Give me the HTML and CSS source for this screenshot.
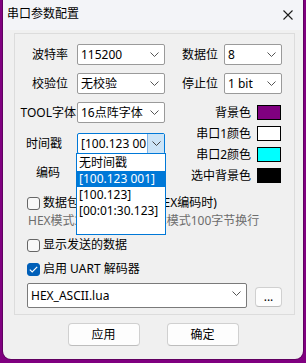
FILE: index.html
```html
<!DOCTYPE html>
<html lang="zh-CN">
<head>
<meta charset="utf-8">
<title>串口参数配置</title>
<link rel="stylesheet" href="styles.css">
</head>
<body>
<div class="window">
  <div class="titlebar">
    <span class="title">串口参数配置</span>
    <svg class="close" width="10" height="10" viewBox="0 0 10 10"><path d="M0.5 0.5L9.5 9.5M9.5 0.5L0.5 9.5" stroke="#1b1b1b" stroke-width="1.1" fill="none"/></svg>
  </div>
  <div class="body">
    <div class="group">
      <div class="top">
        <div class="col-left">
          <div class="row">
            <span class="lbl pr9">波特率</span>
            <div class="combo"><span class="val">115200</span><svg class="chev" width="9" height="5" viewBox="0 0 9 5"><path d="M0.5 0.5L4.5 4.5L8.5 0.5" stroke="#555" fill="none"/></svg></div>
          </div>
          <div class="row">
            <span class="lbl pr9">校验位</span>
            <div class="combo"><span class="val">无校验</span><svg class="chev" width="9" height="5" viewBox="0 0 9 5"><path d="M0.5 0.5L4.5 4.5L8.5 0.5" stroke="#555" fill="none"/></svg></div>
          </div>
          <div class="row">
            <span class="lbl pr1">TOOL字体</span>
            <div class="combo"><span class="val">16点阵字体</span><svg class="chev" width="9" height="5" viewBox="0 0 9 5"><path d="M0.5 0.5L4.5 4.5L8.5 0.5" stroke="#555" fill="none"/></svg></div>
          </div>
          <div class="row row-ts">
            <span class="lbl pr15">时间戳</span>
            <div class="combo focus">
              <span class="val clip">[100.123 001]</span>
              <span class="arrowbtn"><svg width="9" height="5" viewBox="0 0 9 5"><path d="M0.5 0.5L4.5 4.5L8.5 0.5" stroke="#444" fill="none"/></svg></span>
              <ul class="dropdown">
                <li>无时间戳</li>
                <li class="sel">[100.123 001]</li>
                <li>[100.123]</li>
                <li>[00:01:30.123]</li>
              </ul>
            </div>
          </div>
          <div class="row row-enc">
            <span class="lbl pr17">编码</span>
            <div class="combo"><span class="val">HEX</span></div>
          </div>
        </div>
        <div class="col-right">
          <div class="row">
            <span class="rlbl">数据位</span>
            <div class="combo small"><span class="val">8</span><svg class="chev" width="9" height="5" viewBox="0 0 9 5"><path d="M0.5 0.5L4.5 4.5L8.5 0.5" stroke="#555" fill="none"/></svg></div>
          </div>
          <div class="row">
            <span class="rlbl">停止位</span>
            <div class="combo small"><span class="val">1 bit</span><svg class="chev" width="9" height="5" viewBox="0 0 9 5"><path d="M0.5 0.5L4.5 4.5L8.5 0.5" stroke="#555" fill="none"/></svg></div>
          </div>
          <div class="swrow first"><span class="slbl">背景色</span><span class="swatch purple"></span></div>
          <div class="swrow"><span class="slbl">串口1颜色</span><span class="swatch white"></span></div>
          <div class="swrow"><span class="slbl">串口2颜色</span><span class="swatch cyan"></span></div>
          <div class="swrow"><span class="slbl">选中背景色</span><span class="swatch black"></span></div>
        </div>
      </div>
      <label class="check c1"><span class="box"></span>数据包自动分帧显示(HEX编码时)</label>
      <div class="hint">HEX模式32字节换行, 文本模式100字节换行</div>
      <label class="check c2"><span class="box"></span>显示发送的数据</label>
      <label class="check c3"><span class="box on"><svg width="9" height="7" viewBox="0 0 9 7"><path d="M0.8 3.6L3.2 6L8.2 0.8" stroke="#fff" stroke-width="1.2" fill="none"/></svg></span>启用 UART 解码器</label>
      <div class="lua-row">
        <div class="combo lua"><span class="val">HEX_ASCII.lua</span><svg class="chev" width="9" height="5" viewBox="0 0 9 5"><path d="M0.5 0.5L4.5 4.5L8.5 0.5" stroke="#555" fill="none"/></svg></div>
        <button class="btn dots">...</button>
      </div>
    </div>
    <div class="buttons">
      <button class="btn main">应用</button>
      <button class="btn main">确定</button>
    </div>
  </div>
</div>
</body>
</html>
```
FILE: styles.css
```css
* { box-sizing: border-box; }
html, body { margin: 0; padding: 0; }
body {
  width: 306px;
  height: 363px;
  background: #800080;
  overflow: hidden;
  font-family: "Noto Sans", "Noto Sans CJK SC", sans-serif;
  font-size: 12px;
  color: #000;
}
.window {
  margin-left: 3px;
  width: 300px;
  height: 359px;
  background: #f0f0f0;
  border-radius: 0 0 8px 8px;
  box-shadow: 0 0 0 1px rgba(0,0,0,0.25);
  overflow: visible;
}
.titlebar {
  height: 30px;
  background: #f3f4f8;
  display: flex;
  align-items: center;
  justify-content: space-between;
  padding: 0 10px 2px 4px;
}
.title { font-size: 12px; line-height: 16px; }
.close { display: block; margin-top: 1px; }
.body { padding-top: 3px; }
.group {
  margin-left: 11px;
  width: 281px;
  height: 282px;
  border: 1px solid #dcdcdc;
  padding-top: 10px;
}
.top { display: flex; }
.col-left { width: 150px; display: flex; flex-direction: column; gap: 8px; }
.col-right { width: 117px; display: flex; flex-direction: column; gap: 8px; }
.row { display: flex; align-items: center; height: 21px; }
.row-ts { margin-top: 2px; }
.lbl {
  width: 62px;
  text-align: right;
  white-space: nowrap;
  line-height: 16px;
}
.pr1 { padding-right: 1px; }
.pr9 { padding-right: 9px; }
.pr15 { padding-right: 15px; }
.pr17 { padding-right: 17px; }
.combo {
  position: relative;
  width: 88px;
  height: 21px;
  background: #fff;
  border: 1px solid #9a9a9a;
  border-radius: 2px;
  display: flex;
  align-items: center;
  padding-left: 3px;
}
.combo .val { line-height: 16px; white-space: nowrap; }
.combo .chev { position: absolute; right: 5px; top: 7px; }
.combo.small { width: 58px; }
.combo.focus { border-color: #0078d7; }
.combo .clip { overflow: hidden; width: 67px; }
.arrowbtn {
  position: absolute;
  right: 0;
  top: 0;
  bottom: 0;
  width: 17px;
  background: #cce4f7;
  border-left: 1px solid #7eb4ea;
  display: flex;
  align-items: center;
  justify-content: center;
}
.dropdown {
  position: absolute;
  left: -2px;
  top: 19px;
  width: 90px;
  height: 82px;
  margin: 0;
  padding: 1px 0 0;
  list-style: none;
  background: #fff;
  border: 1px solid #0078d7;
  z-index: 5;
}
.dropdown li {
  height: 16px;
  line-height: 16px;
  padding-left: 2px;
  white-space: nowrap;
}
.dropdown li.sel { background: #0078d7; color: #fff; }
.rlbl { width: 59px; text-align: right; padding-right: 6px; line-height: 16px; white-space: nowrap; }
.swrow { display: flex; align-items: center; justify-content: flex-end; height: 15px; gap: 6px; padding-right: 1px; margin-top: -2px; }
.swrow.first { margin-top: 3px; }
.slbl { line-height: 16px; white-space: nowrap; }
.swatch { width: 24px; height: 15px; border: 1px solid #000; }
.purple { background: #800080; }
.white { background: #fff; }
.cyan { background: #00ffff; }
.black { background: #000; }
.check {
  display: flex;
  align-items: center;
  height: 16px;
  margin-left: 12px;
  gap: 3px;
  white-space: nowrap;
  line-height: 16px;
}
.c1 { margin-top: 12px; }
.c2 { margin-top: 8px; }
.c3 { margin-top: 8px; }
.box {
  width: 13px;
  height: 13px;
  border: 1px solid #666;
  border-radius: 3px;
  background: #f8f8f8;
  display: flex;
  align-items: center;
  justify-content: center;
}
.box.on { background: #005fb8; border-color: #005fb8; }
.hint {
  margin: 2px 0 0 13px;
  height: 16px;
  line-height: 16px;
  color: #6d6d6d;
  white-space: nowrap;
}
.lua-row { display: flex; align-items: flex-end; margin: 6px 0 0 12px; gap: 8px; }
.combo.lua { width: 220px; height: 25px; border-color: #7a7a7a; }
.btn {
  font-family: inherit;
  font-size: 12px;
  color: #000;
  background: #fdfdfd;
  border: 1px solid #d0d0d0;
  border-bottom-color: #bdbdbd;
  border-radius: 4px;
  padding: 0;
  line-height: 16px;
}
.dots { width: 27px; height: 20px; margin-bottom: 1px; }
.buttons { display: flex; justify-content: center; gap: 27px; margin-top: 8px; }
.main { width: 72px; height: 23px; }
```
